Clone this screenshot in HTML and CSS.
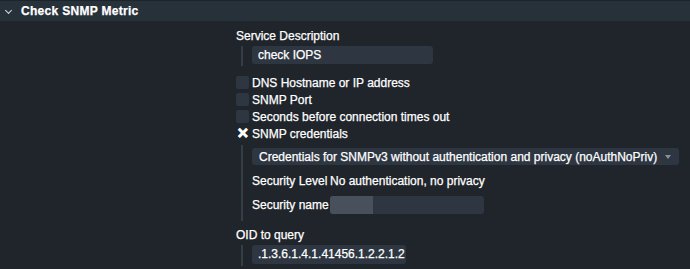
FILE: index.html
```html
<!DOCTYPE html>
<html lang="en">
<head>
    <meta charset="UTF-8">
    <title>Check SNMP Metric</title>
    <link rel="stylesheet" href="styles.css">
</head>
<body>
    <div class="header">
        <span class="chevron"></span>
        <span class="title">Check SNMP Metric</span>
    </div>

    <div class="form">
        <div class="label">Service Description</div>
        <div class="indent">
            <div class="input desc">check IOPS</div>
        </div>

        <div class="check-list">
            <div class="check-row"><span class="box"></span>DNS Hostname or IP address</div>
            <div class="check-row"><span class="box"></span>SNMP Port</div>
            <div class="check-row"><span class="box"></span>Seconds before connection times out</div>
            <div class="check-row"><span class="box checked">&#x2715;</span>SNMP credentials</div>
        </div>

        <div class="indent creds">
            <div class="select">
                <span>Credentials for SNMPv3 without authentication and privacy (noAuthNoPriv)</span>
                <span class="arrow"></span>
            </div>
            <div class="pair level">
                <span class="key">Security Level</span>
                <span>No authentication, no privacy</span>
            </div>
            <div class="pair">
                <span class="key">Security name</span>
                <div class="input secname"><span class="blur"></span></div>
            </div>
        </div>

        <div class="label oid-label">OID to query</div>
        <div class="indent">
            <div class="input oid">.1.3.6.1.4.1.41456.1.2.2.1.2</div>
        </div>
    </div>
</body>
</html>
```

FILE: styles.css
```css
body {
    margin: 0;
    background-color: #1f252b;
    color: #ffffff;
    font-family: "Liberation Sans", Arial, sans-serif;
    font-size: 12px;
    -webkit-text-stroke: 0.25px #ffffff;
    overflow: hidden;
}

.header {
    display: flex;
    align-items: center;
    height: 20px;
    background-color: #27313a;
    border-top: 1px solid #1c2329;
}

.chevron {
    width: 4px;
    height: 4px;
    margin: 0 10px 2px 6px;
    border-right: 1.5px solid #d8dde2;
    border-bottom: 1.5px solid #d8dde2;
    transform: rotate(45deg);
}

.title {
    font-weight: bold;
    letter-spacing: 0.3px;
}

.form {
    padding: 8px 0 0 236px;
}

.label {
    line-height: 14px;
}

.indent {
    margin: 3px 0 0 5px;
    padding: 0 0 2px 9px;
    border-left: 2px solid #353d45;
}

.input {
    height: 18px;
    line-height: 18px;
    background-color: #2d3641;
    border-radius: 3px;
    padding-left: 6px;
    box-sizing: border-box;
}

.desc {
    width: 181px;
}

.check-list {
    margin-top: 8px;
}

.check-row {
    display: flex;
    align-items: center;
    height: 17px;
}

.box {
    width: 13px;
    height: 13px;
    margin-right: 3px;
    background-color: #2d3641;
    border-radius: 2px;
    font-size: 14px;
    font-weight: bold;
    line-height: 13px;
    text-align: center;
    -webkit-text-stroke: 0.8px #ffffff;
}

.box.checked {
    background: none;
}

.creds {
    margin-top: 3px;
    padding-top: 3px;
    padding-bottom: 7px;
}

.select {
    display: flex;
    align-items: center;
    justify-content: space-between;
    width: 427px;
    height: 17px;
    padding: 0 8px 0 7px;
    box-sizing: border-box;
    background-color: #2d3641;
    border-radius: 3px;
}

.arrow {
    width: 0;
    height: 0;
    border-left: 3.5px solid transparent;
    border-right: 3.5px solid transparent;
    border-top: 4px solid #8a9299;
}

.pair {
    display: flex;
    align-items: center;
}

.pair .key {
    width: 78px;
}

.level {
    height: 14px;
    margin: 9px 0 8px;
}

.secname {
    width: 154px;
    padding: 0;
}

.blur {
    display: block;
    width: 43px;
    height: 18px;
    background-color: #48515b;
    border-radius: 3px 0 0 3px;
}

.oid-label {
    margin-top: 7px;
}

.oid {
    width: 154px;
    height: 19px;
    line-height: 19px;
}
```
